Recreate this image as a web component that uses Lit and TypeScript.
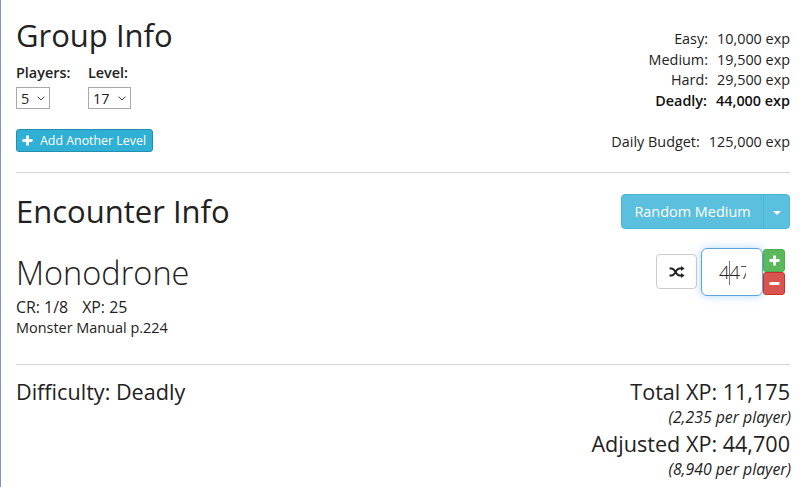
import { LitElement, html, css, svg } from "lit";
import { customElement, property, state } from "lit/decorators.js";

const plus = svg`<path d="M4.1 0.5h2.8v3.6h3.6v2.8H6.9v3.6H4.1V6.9H0.5V4.1h3.6z" fill="currentColor"/>`;
const minus = svg`<path d="M0.5 4.1h10v2.8h-10z" fill="currentColor"/>`;

@customElement("pick-box")
export class PickBox extends LitElement {
  @property() value = "";
  static styles = css`
    :host { display: flex; box-sizing: border-box; height: 22px; border: 1px solid #a9a9a9; background: #fff;
      align-items: center; justify-content: space-between; padding: 0 4px 0 4px; font-size: 14.4px; line-height: 20px; }
    span { padding-top: 2px; }
    svg { display: block; width: 8px; height: 5px; margin-top: 1px; }
  `;
  render() {
    return html`<span>${this.value}</span>
      <svg viewBox="0 0 8 5"><path d="M0.7 0.7L4 4L7.3 0.7" fill="none" stroke="#444" stroke-width="1"/></svg>`;
  }
}

@customElement("app-root")
export class AppRoot extends LitElement {
  @state() private budget = [
    ["Easy:", "10,000 exp"], ["Medium:", "19,500 exp"], ["Hard:", "29,500 exp"], ["Deadly:", "44,000 exp"],
  ];
  static styles = css`
    :host { display: block; box-sizing: border-box; height: 487px; overflow: hidden; background: #fff;
      border-left: 1px solid #8290c8; padding: 0 10px 0 15px; color: #222;
      font-family: "Open Sans", "Noto Sans", sans-serif; font-size: 14.4px; white-space: nowrap; }
    * { box-sizing: border-box; }
    section { display: flex; justify-content: space-between; align-items: flex-start; }
    .group { height: 173px; border-bottom: 1px solid #d8d8d8; }
    .encounter { height: 65px; }
    .monster { height: 127px; border-bottom: 1px solid #d8d8d8; }
    h1, h2, h3 { margin: 0; font-weight: 400; }
    h1 { font-size: 31px; line-height: 40px; }
    .group h1 { margin-top: 15px; }
    .encounter h1 { margin-top: 18px; }
    .fields { display: flex; margin-top: 7px; }
    .players { width: 72px; }
    .label { font-weight: 600; line-height: 22px; margin-bottom: 3px; }
    .players pick-box { width: 34px; }
    .level pick-box { width: 43px; }
    .add { display: flex; align-items: center; width: 137px; height: 23px; margin-top: 20px; padding: 0 5px;
      border: 1px solid #2390b0; border-radius: 3px; background: #31b0d5; color: #fff; font: inherit; font-size: 12.4px; gap: 7px; }
    .add svg { width: 11px; height: 11px; flex: none; }
    .budget { display: flex; flex-direction: column; align-items: flex-end; margin-top: 29px; line-height: 20.6px; }
    .row { display: flex; gap: 9px; }
    .row.active { font-weight: 600; color: #111; }
    .row.daily { margin-top: 20.6px; }
    .random { display: flex; width: 169px; height: 35px; margin-top: 21px; border: 1px solid #46b8da; border-radius: 4px;
      background: #5bc0de; color: #fff; font-size: 14.45px; line-height: 34px; }
    .random .text { flex: 1; text-align: center; }
    .random .more { width: 26px; border-left: 1px solid #46b8da; display: flex; align-items: center; justify-content: center; }
    .more svg { width: 8px; height: 4px; margin-top: 3px; }
    h2 { font-size: 32.5px; font-weight: 300; line-height: 40px; margin-top: 15px; }
    .stats { display: flex; gap: 14px; font-size: 15.9px; line-height: 22px; margin-top: 3px; }
    .source { font-size: 14.45px; line-height: 20px; }
    .count { display: flex; align-items: flex-start; margin: 10px 5px 0 0; }
    .shuffle { width: 41px; height: 35px; margin: 6px 4px 0 0; border: 1px solid #ccc; border-radius: 4px;
      display: flex; align-items: center; justify-content: center; }
    .shuffle svg { width: 16px; height: 12px; }
    .number { width: 62px; height: 48px; border: 1px solid #5aa5e0; border-radius: 6px; padding-left: 17px;
      box-shadow: 0 0 8px rgba(102,175,233,.5); font-size: 18.5px; line-height: 46px; color: #222; display: flex; align-items: center; }
    .digits { width: 27px; overflow: hidden; font-weight: 300; }
    .caret { display: inline-block; width: 1px; height: 24px; background: #777; vertical-align: middle; margin: 0 0 2px -1px; }
    .steps { display: flex; flex-direction: column; margin-top: 1px; }
    .step { width: 22px; height: 23px; border: 1px solid #4cae4c; border-radius: 3px; background: #5cb85c; color: #fff;
      display: flex; align-items: center; justify-content: center; }
    .step.down { border-color: #c9302c; background: #d9534f; }
    .step svg { width: 11px; height: 11px; }
    h3 { font-size: 21.6px; line-height: 28px; }
    .difficulty { margin-top: 13px; }
    .totals { text-align: right; margin-top: 13px; }
    .per { font-style: italic; font-size: 15.8px; line-height: 22px; margin: 0 -1px 2px 0; }
  `;
  render() {
    return html`
      <section class="group">
        <div>
          <h1>Group Info</h1>
          <div class="fields">
            <div class="players"><div class="label">Players:</div><pick-box value="5"></pick-box></div>
            <div class="level"><div class="label">Level:</div><pick-box value="17"></pick-box></div>
          </div>
          <button class="add"><svg viewBox="0 0 11 11">${plus}</svg><span>Add Another Level</span></button>
        </div>
        <div class="budget">
          ${this.budget.map(([k, v]) => html`<div class="row ${k === "Deadly:" ? "active" : ""}"><span>${k}</span><span>${v}</span></div>`)}
          <div class="row daily"><span>Daily Budget:</span><span>125,000 exp</span></div>
        </div>
      </section>
      <section class="encounter">
        <h1>Encounter Info</h1>
        <div class="random"><span class="text">Random Medium</span>
          <span class="more"><svg viewBox="0 0 8 4"><path d="M0 0h8L4 4z" fill="#fff"/></svg></span></div>
      </section>
      <section class="monster">
        <div>
          <h2>Monodrone</h2>
          <div class="stats"><span>CR: 1/8</span><span>XP: 25</span></div>
          <div class="source">Monster Manual p.224</div>
        </div>
        <div class="count">
          <div class="shuffle"><svg viewBox="0 0 16 12">
            <path d="M0.5 2.5h2C6.5 2.5 6.5 9.5 10.5 9.5H13M0.5 9.5h2C6.5 9.5 6.5 2.5 10.5 2.5H13" fill="none" stroke="#222" stroke-width="1.9"/>
            <path d="M12 0l3.6 2.5-3.6 2.5zM12 7l3.6 2.5-3.6 2.5z" fill="#222"/></svg></div>
          <div class="number"><div class="digits">4<span class="caret"></span>47</div></div>
          <div class="steps">
            <div class="step"><svg viewBox="0 0 11 11">${plus}</svg></div>
            <div class="step down"><svg viewBox="0 0 11 11">${minus}</svg></div>
          </div>
        </div>
      </section>
      <section>
        <h3 class="difficulty">Difficulty: Deadly</h3>
        <div class="totals">
          <h3>Total XP: 11,175</h3><div class="per">(2,235 per player)</div>
          <h3>Adjusted XP: 44,700</h3><div class="per">(8,940 per player)</div>
        </div>
      </section>`;
  }
}
